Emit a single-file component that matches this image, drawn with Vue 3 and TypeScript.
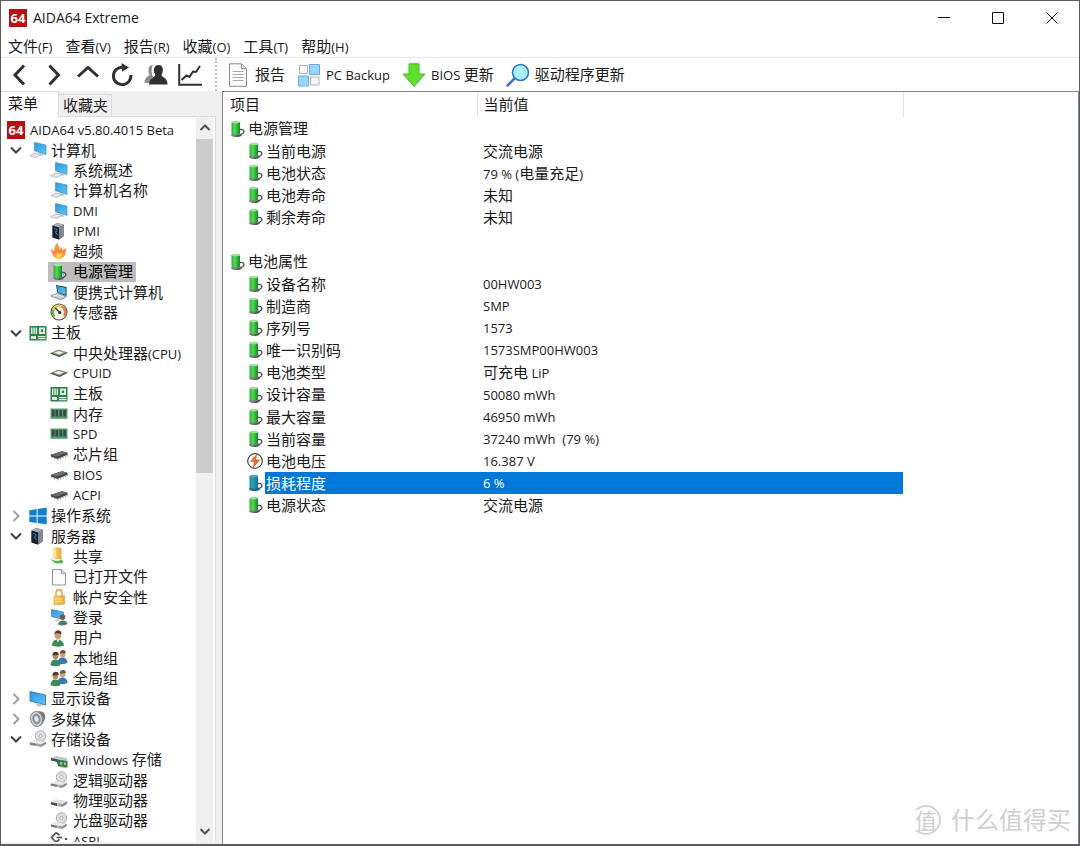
<script setup lang="ts">
import { h, ref, type FunctionalComponent } from 'vue'

interface TreeNode {
  label: string
  icon: string
  level: 0 | 1 | 2
  open?: boolean
}

interface InfoRow {
  name: string
  value?: string
  icon?: string
  kind: 'group' | 'item' | 'blank'
}

// Chinese runs are set slightly larger than the Latin ones beside them.
const Txt: FunctionalComponent<{ t: string }> = (props) =>
  h(
    'span',
    { class: 'txt' },
    props.t
      .split(/([\u4e00-\u9fff]+)/)
      .filter((s) => s !== '')
      .map((s) => (/[\u4e00-\u9fff]/.test(s) ? h('span', { class: 'cjk' }, s) : s)),
  )
Txt.props = ['t']

const menus = ['文件(F)', '查看(V)', '报告(R)', '收藏(O)', '工具(T)', '帮助(H)']

const navTools = [
  { id: 'back', label: '后退' },
  { id: 'forward', label: '前进' },
  { id: 'up', label: '向上' },
  { id: 'refresh', label: '刷新' },
  { id: 'users', label: '用户' },
  { id: 'chart', label: '图表' },
]

const actions = [
  { id: 'report', label: '报告' },
  { id: 'backup', label: 'PC Backup' },
  { id: 'download', label: 'BIOS 更新' },
  { id: 'search', label: '驱动程序更新' },
]

const n = (level: 0 | 1 | 2, icon: string, label: string, open?: boolean): TreeNode => ({ level, icon, label, open })

const tree: TreeNode[] = [
  n(0, 'logo', 'AIDA64 v5.80.4015 Beta'),
  n(1, 'computer', '计算机', true),
  n(2, 'computer', '系统概述'),
  n(2, 'computer', '计算机名称'),
  n(2, 'computer', 'DMI'),
  n(2, 'server', 'IPMI'),
  n(2, 'flame', '超频'),
  n(2, 'battery', '电源管理'),
  n(2, 'laptop', '便携式计算机'),
  n(2, 'gauge', '传感器'),
  n(1, 'board', '主板', true),
  n(2, 'cpu', '中央处理器(CPU)'),
  n(2, 'cpu', 'CPUID'),
  n(2, 'board', '主板'),
  n(2, 'memory', '内存'),
  n(2, 'memory', 'SPD'),
  n(2, 'chip', '芯片组'),
  n(2, 'chip', 'BIOS'),
  n(2, 'chip', 'ACPI'),
  n(1, 'windows', '操作系统', false),
  n(1, 'server', '服务器', true),
  n(2, 'share', '共享'),
  n(2, 'file', '已打开文件'),
  n(2, 'lock', '帐户安全性'),
  n(2, 'logon', '登录'),
  n(2, 'user', '用户'),
  n(2, 'group', '本地组'),
  n(2, 'group', '全局组'),
  n(1, 'display', '显示设备', false),
  n(1, 'speaker', '多媒体', false),
  n(1, 'disc', '存储设备', true),
  n(2, 'winstore', 'Windows 存储'),
  n(2, 'disc', '逻辑驱动器'),
  n(2, 'drive', '物理驱动器'),
  n(2, 'disc', '光盘驱动器'),
  n(2, 'aspi', 'ASPI'),
]

const item = (name: string, value: string, icon = 'battery'): InfoRow => ({ kind: 'item', name, value, icon })

const rows: InfoRow[] = [
  { kind: 'group', name: '电源管理', icon: 'battery' },
  item('当前电源', '交流电源'),
  item('电池状态', '79 % (电量充足)'),
  item('电池寿命', '未知'),
  item('剩余寿命', '未知'),
  { kind: 'blank', name: '' },
  { kind: 'group', name: '电池属性', icon: 'battery' },
  item('设备名称', '00HW003'),
  item('制造商', 'SMP'),
  item('序列号', '1573'),
  item('唯一识别码', '1573SMP00HW003'),
  item('电池类型', '可充电 LiP'),
  item('设计容量', '50080 mWh'),
  item('最大容量', '46950 mWh'),
  item('当前容量', '37240 mWh  (79 %)'),
  item('电池电压', '16.387 V', 'bolt'),
  item('损耗程度', '6 %'),
  item('电源状态', '交流电源'),
]

const selectedNode = ref(7)
const selectedRow = ref(16)
const activeTab = ref(0)
</script>

<template>
  <div class="window">
    <svg class="defs" width="0" height="0" aria-hidden="true">
      <defs>
        <linearGradient id="g-scr" x1="0" y1="0" x2="1" y2="1">
          <stop offset="0" stop-color="#2f97dc" /><stop offset="1" stop-color="#5cc6f7" />
        </linearGradient>
        <linearGradient id="g-bat" x1="0" y1="0" x2="1" y2="0">
          <stop offset="0" stop-color="#2fae3a" /><stop offset=".4" stop-color="#4fdc50" /><stop offset="1" stop-color="#17812a" />
        </linearGradient>
        <linearGradient id="g-sel" x1="0" y1="0" x2="1" y2="0">
          <stop offset="0" stop-color="#1a84a0" /><stop offset=".4" stop-color="#2fa5a8" /><stop offset="1" stop-color="#136c94" />
        </linearGradient>
        <linearGradient id="g-fire" x1="0" y1="0" x2="0" y2="1">
          <stop offset="0" stop-color="#f6a13a" /><stop offset=".6" stop-color="#f9843a" /><stop offset="1" stop-color="#fdc44a" />
        </linearGradient>
        <linearGradient id="g-gold" x1="0" y1="0" x2="1" y2="0">
          <stop offset="0" stop-color="#f9d36e" /><stop offset="1" stop-color="#e9a93a" />
        </linearGradient>
        <linearGradient id="g-drv" x1="0" y1="0" x2="1" y2="0">
          <stop offset="0" stop-color="#dcdcdc" /><stop offset="1" stop-color="#777" />
        </linearGradient>
      </defs>
      <symbol id="i-logo" viewBox="0 0 18 18">
        <rect width="18" height="18" fill="#b80f12" />
        <text x="9" y="14" text-anchor="middle" class="logo-text">64</text>
      </symbol>
      <symbol id="i-computer" viewBox="0 0 18 18">
        <path d="M5.500 1.500 17 4v9.500L5.500 9.800z" fill="url(#g-scr)" stroke="#3a7fb0" stroke-width=".6" />
        <path d="M10 11.600 14 13l-.5 2-4-1.200z" fill="#bcc4ca" />
        <path d="M.5 14.800 6 11.800l6.500 1.700-6 3.200z" fill="#d3dade" stroke="#9aa6ae" stroke-width=".5" />
        <path d="M2.500 14.800 8 13M4.500 15.500l5.500-2" stroke="#f5f7f8" stroke-width=".6" />
      </symbol>
      <symbol id="i-server" viewBox="0 0 18 18">
        <path d="M2.500 3.500 7 1l7 1.800V14l-4.800 3.500-6.700-2z" fill="#4b4f54" />
        <path d="M9 5.200 14 3v11l-4.800 3.500z" fill="#85898d" />
        <path d="M2.500 3.500 9 5.200v12.300l-6.500-2z" fill="#17222f" />
        <path d="M2.500 3.500 7 1l7 1.800-5 2.400z" fill="#a9adb1" />
        <path d="M4 6.500c3 0 4 2 1.500 3.500L7.500 13" fill="none" stroke="#3378b5" stroke-width="1.200" />
      </symbol>
      <symbol id="i-flame" viewBox="0 0 18 18">
        <path d="M8 17C4 16.500 1.500 13 1 6.500l3.200 3C4 6 5 3 7.500.8 8 4 9.500 5 10 8l2-3.500.6 3.500L16.500 6c-.5 2-1.500 4-1 6-1 3-4 5-7.500 5z" fill="url(#g-fire)" />
        <path d="M8 16.500c-2-2-2-4-.5-6l1.500 2 3-2c0 3-1 5-4 6z" fill="#fdd45c" />
      </symbol>
      <symbol id="i-battery" viewBox="0 0 18 18">
        <ellipse cx="8.500" cy="15" rx="5.500" ry="2" fill="#7b7e7e" />
        <path d="M3.500 2v11.500c1.500 1.400 7 1.400 8.500 0V2z" fill="url(#g-bat)" />
        <ellipse cx="7.800" cy="2" rx="4.200" ry="1.200" fill="#a4dfa0" />
        <path d="M12 9.500c4.500-.5 5 3 2 4.500-1.500.8-3 2.500-5.500 2.200" fill="none" stroke="#4b4e50" stroke-width="1.300" />
      </symbol>
      <symbol id="i-battery-sel" viewBox="0 0 18 18">
        <ellipse cx="8.500" cy="15" rx="5.500" ry="2" fill="#2f6590" />
        <path d="M3.500 2v11.500c1.500 1.400 7 1.400 8.500 0V2z" fill="url(#g-sel)" />
        <ellipse cx="7.800" cy="2" rx="4.200" ry="1.200" fill="#5aa4c0" />
        <path d="M12 9.500c4.500-.5 5 3 2 4.500-1.500.8-3 2.500-5.500 2.200" fill="none" stroke="#22527c" stroke-width="1.300" />
      </symbol>
      <symbol id="i-bolt" viewBox="0 0 18 18">
        <circle cx="9" cy="9" r="7.300" fill="#fff" stroke="#4a4a4a" stroke-width="1.200" />
        <path d="M11 2 4.500 9.500l4 .2L7 16l6.500-8-4-.2z" fill="#e8702a" stroke="#b54e14" stroke-width=".5" />
      </symbol>
      <symbol id="i-laptop" viewBox="0 0 18 18">
        <path d="M6 2 16.500 4v9L7.500 10z" fill="#23323f" />
        <path d="M7 3 15.500 4.800v7L8 9.500z" fill="url(#g-scr)" />
        <path d="M.5 13 7 10.500l9.500 3L11 16.800z" fill="#c9d0d6" stroke="#66747f" stroke-width=".7" />
        <path d="M3 13.200 7.500 11.700l6 2" fill="none" stroke="#eef1f3" stroke-width=".8" />
      </symbol>
      <symbol id="i-gauge" viewBox="0 0 18 18">
        <circle cx="9" cy="9" r="8" fill="#fbf7e6" stroke="#55584f" stroke-width="1.200" />
        <path d="M4.500 13.500a6.200 6.200 0 0 1-1-7" fill="none" stroke="#5fb848" stroke-width="2.400" />
        <path d="M3.500 6.500a6.200 6.200 0 0 1 8-3" fill="none" stroke="#f2c53d" stroke-width="2.400" />
        <path d="M11.500 3.500a6.200 6.200 0 0 1 2.500 9.300" fill="none" stroke="#ea7a4c" stroke-width="2.400" />
        <path d="m5 5 5 4.500" stroke="#333" stroke-width="1.500" /><circle cx="9.800" cy="9.500" r="1.600" fill="#333" />
      </symbol>
      <symbol id="i-board" viewBox="0 0 18 18">
        <rect x=".5" y="2" width="17" height="14.500" fill="#2f7f4a" />
        <path d="M2 3.500h1.500V10H2zM4.300 3.500h1.500V10H4.300zM6.600 3.500h1.500V10H6.600zM10 3.500h6V10h-6zM2 12h5v3H2zM9 12h7.500v1.200H9zM9 14h7.500v1.200H9z" fill="#d9efdd" />
        <path d="M12 5.500h2V8h-2z" fill="#2f7f4a" />
      </symbol>
      <symbol id="i-cpu" viewBox="0 0 18 18">
        <path d="M0 9.500 8.500 6 18 8.800 9.500 13z" fill="#3d4a38" />
        <path d="M1 8.700 8.500 5.500 17 8.300 9.500 11.800z" fill="#82947a" />
        <path d="M4 8.700 8.600 6.900l5 1.600-4.300 2z" fill="#eef0e2" />
      </symbol>
      <symbol id="i-memory" viewBox="0 0 18 18">
        <path d="M.5 3.500h17V14H.5z" fill="#4f9a6d" />
        <path d="M2 5h2.500v6.500H2zM5.500 5H8v6.500H5.500zM9.500 5H12v6.500H9.500zM13.300 5h2.700v6.500h-2.700z" fill="#3c4746" />
        <path d="M1 13.500h7.500M10 13.500h7" stroke="#9bbf9e" stroke-dasharray="1 .6" />
      </symbol>
      <symbol id="i-chip" viewBox="0 0 18 18">
        <path d="M.8 8.800 12 5.200l5.500 1.500v2L7.500 13 .8 10.500z" fill="#3f4143" />
        <path d="M.8 8.800 12 5.200l5.500 1.500L7 10.700z" fill="#6b6d70" />
        <path d="M2 10.500v1.800M4.500 11.500v1.800M8 12.700v1.800M10.500 11.600v1.800M13 10.600v1.800M15.500 9.500v1.800M17.300 8.700v1.600" stroke="#9b9da0" stroke-width="1" />
      </symbol>
      <symbol id="i-windows" viewBox="0 0 18 18">
        <path d="M.3 3.200 7.700 2v6.500H.3zM8.600 1.900 17.700.6v7.900H8.600zM.3 9.500h7.400V16L.3 14.900zM8.600 9.500h9.100v7.900l-9.100-1.300z" fill="#0f7fd4" />
      </symbol>
      <symbol id="i-share" viewBox="0 0 18 18">
        <path d="M3.500.5H9l2.500 1V12h-8z" fill="url(#g-gold)" />
        <path d="M3.500.5 6 2v11l-2.500-1.500z" fill="#fbe29a" />
        <path d="M.5 11.500c3 2.500 6 3 10 1.500V11.500l3 3-2.500 3v-1.500C6.500 17.500 2.500 15.500.5 11.500z" fill="#52b552" />
      </symbol>
      <symbol id="i-file" viewBox="0 0 18 18">
        <path d="M2.500 1.500h9l4 4v11.500h-13z" fill="#fbfbfb" stroke="#898989" stroke-width=".9" />
        <path d="M11.500 1.500v4h4" fill="#e3e3e3" stroke="#898989" stroke-width=".8" />
      </symbol>
      <symbol id="i-lock" viewBox="0 0 18 18">
        <path d="M6 8.500V5c0-4.500 6-4.500 6 0v3.500" fill="none" stroke="#dfac43" stroke-width="1.600" />
        <path d="M4 8.500 14.500 7.500V16L4 17z" fill="url(#g-gold)" stroke="#cf952f" stroke-width=".6" />
        <path d="M6 11h6.500M6 13.500h6.500" stroke="#fbe5a5" stroke-width=".7" />
      </symbol>
      <symbol id="i-logon" viewBox="0 0 18 18">
        <path d="M1.500 1.500 13.500 4v7.500l-12-3z" fill="url(#g-scr)" stroke="#3a6f98" stroke-width=".6" />
        <path d="M4 12.500 8 11l3 1-4 1.500z" fill="#c2c9cf" />
        <circle cx="12.500" cy="9" r="2.800" fill="#7a5a45" />
        <path d="M8 16.500c.5-5 8.500-5.500 9.500-.5-2.500 1.500-6.500 2-9.500.5z" fill="#477f62" />
      </symbol>
      <symbol id="i-user" viewBox="0 0 18 18">
        <path d="M2 16.500c0-8 11-8 12 0-3 1.500-9 1.500-12 0z" fill="#3f8a5b" />
        <path d="m6.500 10.500 1.500 3 1.500-3z" fill="#e8f0e8" />
        <ellipse cx="8" cy="6" rx="3.300" ry="4" fill="#c79a76" />
        <path d="M4.500 5.500C4 .5 11.500-.5 11.600 5c-3 0-4-1-5-1z" fill="#55402f" />
      </symbol>
      <symbol id="i-group" viewBox="0 0 18 18">
        <path d="M7.500 14c0-7 9.500-7.500 10 0-3 1.500-7 1.500-10 0z" fill="#3a78b3" />
        <ellipse cx="12.700" cy="5" rx="2.800" ry="3.400" fill="#c9a17e" />
        <path d="M9.700 4.500C9.500.5 16-.5 15.800 4z" fill="#6d553e" />
        <path d="M.5 16.200c0-7.500 9.500-7.500 10 0-3 1.500-7 1.500-10 0z" fill="#3f8a5b" />
        <ellipse cx="5.500" cy="6.800" rx="2.900" ry="3.500" fill="#b98a68" />
        <path d="M2.400 6.500C2.200 1.500 9 1.500 8.700 6z" fill="#4e392b" />
      </symbol>
      <symbol id="i-display" viewBox="0 0 18 18">
        <path d="M1 1.500 16.500 5v10L1 11z" fill="url(#g-scr)" stroke="#2f7cb4" stroke-width=".9" />
        <path d="m6 13.500 4-.2 4 2-4.500 1.500z" fill="#b9c2c9" />
      </symbol>
      <symbol id="i-speaker" viewBox="0 0 18 18">
        <path d="M8 1.500C15 0 17.500 5 15.500 10s-5 7-9 7z" fill="#77797b" />
        <ellipse cx="7.500" cy="9" rx="6" ry="7.500" transform="rotate(-14 7.500 9)" fill="#d6d8da" stroke="#888" />
        <ellipse cx="7.500" cy="9" rx="4.200" ry="5.500" transform="rotate(-14 7.500 9)" fill="#8c949a" />
        <ellipse cx="7.500" cy="9" rx="2" ry="3" transform="rotate(-14 7.500 9)" fill="#dbe8f0" />
      </symbol>
      <symbol id="i-drive" viewBox="0 0 18 18">
        <path d="m1 11 4.500-2.500L17 10.500v2.300L12.500 16 1 13.500z" fill="url(#g-drv)" />
        <path d="m1 11 4.500-2.500L17 10.500 12.500 13z" fill="#e6e6e6" />
        <path d="M1 11v2.500L7 15v-2.600z" fill="#4c4f52" />
      </symbol>
      <symbol id="i-disc" viewBox="0 0 18 18">
        <circle cx="11.500" cy="6" r="5.300" fill="#dcdfe1" stroke="#a0a4a7" stroke-width=".8" />
        <circle cx="11.500" cy="6" r="1.600" fill="#fff" stroke="#999" stroke-width=".7" />
        <path d="m.8 12.500 5-2.500 11 2v2L12 17 .8 14.800z" fill="url(#g-drv)" />
        <path d="m.8 12.500 5-2.500 11 2L12 14.300z" fill="#e9e9e9" />
        <path d="m.8 12.500 6 1.200v2L.8 14.800z" fill="#77797b" />
      </symbol>
      <symbol id="i-winstore" viewBox="0 0 18 18">
        <path d="M1 7 6 5l11 2v2.500L12.500 12 1 9.500z" fill="#c4c7c9" />
        <path d="m1 7 7 1.500V11L1 9.500z" fill="#45484a" />
        <path d="M6.500 8.500 17.500 10v6.500L8 15.200z" fill="#2f7a4d" />
        <path d="M10 11h2.500v2.500H10zM14 11.500h2V14h-2z" fill="#9cc7a0" /><path d="M8.500 15.500 16 16.700" stroke="#caa84a" />
      </symbol>
      <symbol id="i-aspi" viewBox="0 0 18 18">
        <path d="M9.500 3 6 .8 1.500 5.500 6 10l3.500-2.500M6.500 5.500H12" fill="none" stroke="#484b4e" stroke-width="1.600" />
        <path d="M15 6h2v2h-2z" fill="#484b4e" />
      </symbol>

      <symbol id="t-back" viewBox="0 0 24 24"><path d="m16 2.500-9 9.500 9 9.500" class="stroke" /></symbol>
      <symbol id="t-forward" viewBox="0 0 24 24"><path d="m7.500 2.500 9 9.500-9 9.500" class="stroke" /></symbol>
      <symbol id="t-up" viewBox="0 0 24 24"><path d="m2 13.500 10-9 10 9" class="stroke" /></symbol>
      <symbol id="t-refresh" viewBox="0 0 24 24">
        <path d="M13 4.300A8.700 8.700 0 1 0 20.800 12" class="stroke" /><path d="m11.500 0 7.500 4.500-7 4.300z" fill="#303030" />
      </symbol>
      <symbol id="t-users" viewBox="0 0 24 24">
        <path d="M9 2C3.500 2 4 8 5.500 11.500c0 2-5 2-5 8.500H5c.5-3 2-5 4-6-2-4-2-8.500 0-12z" fill="#8a8a8a" />
        <path d="M14.500 2c5.500 0 5 6.500 3 10 .3 2.500 6 2 6 9.500H5c0-7.500 6-7 6.300-9.500-2-3.500-2.300-10 3.200-10z" fill="#303030" />
      </symbol>
      <symbol id="t-chart" viewBox="0 0 24 24">
        <path d="M1.200 1v20.800H24" fill="none" stroke="#303030" stroke-width="2" />
        <path d="m3.500 17 5-4.500 3 1.500 3.500-5.500 3 .5 4-6" fill="none" stroke="#303030" stroke-width="2" />
      </symbol>
      <symbol id="t-report" viewBox="0 0 24 24">
        <path d="M3.500.8h12l5 5v17.500h-17z" fill="#fbfbfb" stroke="#8b8b8b" />
        <path d="M15.500.8v5h5" fill="#e9e9e9" stroke="#8b8b8b" />
        <path d="M6.500 8.500h11M6.500 11.500h11M6.500 14.500h11M6.500 17.500h11" stroke="#aaa" />
      </symbol>
      <symbol id="t-backup" viewBox="0 0 24 24">
        <path d="M2.500 2.500h8v8h-8zM13.500 14h8.500v8h-8.500z" fill="#f6f6f6" stroke="#b3b3b3" />
        <path d="M12.500 1.500h10v10h-10zM1.500 13h10v10h-10z" fill="#99d6ff" stroke="#65addb" />
      </symbol>
      <symbol id="t-download" viewBox="0 0 24 24">
        <path d="M7 .8h10V11h6L12 23.500 1 11h6z" fill="#5be02c" stroke="#4bb52a" />
      </symbol>
      <symbol id="t-search" viewBox="0 0 24 24">
        <path d="m9.500 14.500-8 8" stroke="#3a76c6" stroke-width="2.500" stroke-linecap="round" />
        <circle cx="14.500" cy="9.500" r="8" fill="#a9f0ff" stroke="#3a76c6" stroke-width="1.600" />
      </symbol>
    </svg>

    <header class="titlebar">
      <svg class="icon"><use href="#i-logo" /></svg>
      <h1>AIDA64 Extreme</h1>
      <div class="winbtns">
        <button aria-label="最小化"><svg viewBox="0 0 12 12"><path d="M0 5.500h12" /></svg></button>
        <button aria-label="最大化"><svg viewBox="0 0 12 12"><path d="M.5.5h11v11H.5z" /></svg></button>
        <button aria-label="关闭"><svg viewBox="0 0 12 12"><path d="m.5.5 11 11m0-11-11 11" /></svg></button>
      </div>
    </header>

    <nav class="menubar">
      <button v-for="m in menus" :key="m"><Txt :t="m" /></button>
    </nav>

    <div class="toolbar">
      <div class="nav">
        <button v-for="t in navTools" :key="t.id" :aria-label="t.label">
          <svg class="tool"><use :href="'#t-' + t.id" /></svg>
        </button>
      </div>
      <div class="actions">
        <button v-for="a in actions" :key="a.id">
          <svg class="tool"><use :href="'#t-' + a.id" /></svg><Txt :t="a.label" />
        </button>
      </div>
    </div>

    <main class="body">
      <aside class="side">
        <div class="tabs" role="tablist">
          <button
            v-for="(t, i) in ['菜单', '收藏夹']"
            :key="t"
            role="tab"
            :aria-selected="activeTab === i"
            :class="{ active: activeTab === i }"
            @click="activeTab = i"
          >
            <Txt :t="t" />
          </button>
        </div>
        <div class="panel">
          <ul class="tree" role="tree">
            <li v-for="(node, i) in tree" :key="i" :class="'lv' + node.level" role="treeitem">
              <svg v-if="node.level === 1" class="chev" :class="{ closed: !node.open }" viewBox="0 0 12 12">
                <path :d="node.open ? 'm1 3.500 5 5 5-5' : 'm3.500 1 5 5-5 5'" />
              </svg>
              <button :class="{ selected: selectedNode === i }" @click="selectedNode = i">
                <svg class="icon"><use :href="'#i-' + node.icon" /></svg><Txt :t="node.label" />
              </button>
            </li>
          </ul>
          <div class="scroll">
            <button aria-label="向上滚动"><svg viewBox="0 0 12 12"><path d="m1.500 8 4.500-4.500L10.500 8" /></svg></button>
            <div class="track"><div class="thumb"></div></div>
            <button aria-label="向下滚动"><svg viewBox="0 0 12 12"><path d="m1.500 4 4.500 4.500L10.500 4" /></svg></button>
          </div>
        </div>
      </aside>

      <section class="content">
        <table>
          <colgroup><col class="c-name" /><col class="c-value" /><col /></colgroup>
          <thead>
            <tr>
              <th scope="col"><Txt t="项目" /></th>
              <th scope="col" class="value"><Txt t="当前值" /></th>
              <td></td>
            </tr>
          </thead>
          <tbody>
            <tr
              v-for="(r, i) in rows"
              :key="i"
              :class="[r.kind, { selected: selectedRow === i }]"
              @click="selectedRow = i"
            >
              <td>
                <div v-if="r.kind !== 'blank'" class="name">
                  <svg class="icon"><use :href="'#i-' + r.icon + (selectedRow === i ? '-sel' : '')" /></svg>
                  <Txt :t="r.name" />
                </div>
              </td>
              <td class="value"><Txt v-if="r.value" :t="r.value" /></td>
              <td></td>
            </tr>
          </tbody>
        </table>
      </section>
    </main>

    <div class="watermark">
      <span class="badge">值</span><span>什么值得买</span>
    </div>
  </div>
</template>

<style>
html,
body {
  margin: 0;
  background: #fff;
}
.txt {
  white-space: pre;
}
.txt .cjk {
  font-size: 15px;
}
.logo-text {
  font: bold 13px 'Open Sans', sans-serif;
  fill: #fff;
}
.stroke {
  fill: none;
  stroke: #303030;
  stroke-width: 3;
}
</style>

<style scoped>
.window {
  position: relative;
  box-sizing: border-box;
  height: 100vh;
  display: flex;
  flex-direction: column;
  border: 1px solid #5e5b5d;
  border-bottom-width: 2px;
  background: #fff;
  color: #1a1a1a;
  font: 13px/20px 'Open Sans', 'Noto Sans CJK SC', sans-serif;
  overflow: hidden;
}
.defs {
  position: absolute;
}
button {
  margin: 0;
  padding: 0;
  border: 0;
  background: none;
  color: inherit;
  font: inherit;
  display: flex;
  align-items: center;
}
.icon {
  width: 18px;
  height: 18px;
  flex: none;
}
.titlebar {
  flex: none;
  display: flex;
  align-items: center;
  height: 34px;
  padding-left: 8px;
}
.titlebar h1 {
  flex: 1;
  margin: 0 0 0 6px;
  font-size: 14px;
  font-weight: 400;
}
.winbtns {
  display: flex;
}
.winbtns button {
  width: 54px;
  height: 34px;
  justify-content: center;
}
.winbtns svg {
  width: 12px;
  height: 12px;
}
.winbtns path {
  fill: none;
  stroke: #111;
}
.menubar {
  flex: none;
  display: flex;
  gap: 13px;
  height: 22px;
  padding-left: 7px;
  border-bottom: 1px solid #e6e6e6;
}
.toolbar {
  flex: none;
  display: flex;
  height: 33px;
}
.nav {
  display: flex;
  padding: 0 8px 0 2px;
  border-right: 2px dotted #c4c4c4;
}
.nav button {
  width: 34px;
  justify-content: center;
}
.tool {
  width: 24px;
  height: 24px;
  flex: none;
}
.actions {
  display: flex;
  gap: 12px;
  padding-left: 9px;
}
.actions button {
  gap: 5px;
}
.body {
  flex: 1;
  min-height: 0;
  display: flex;
  background: #f0f0f0;
}
.side {
  width: 221px;
  flex: none;
  display: flex;
  flex-direction: column;
  padding-bottom: 2px;
  box-sizing: border-box;
}
.tabs {
  flex: none;
  display: flex;
  align-items: flex-end;
  height: 26px;
  padding-right: 6px;
}
.tabs::after {
  content: '';
  flex: 1;
  border-bottom: 1px solid #dcdcdc;
}
.tabs button {
  box-sizing: border-box;
  height: 23px;
  padding: 0 3px 0 4px;
  border: 1px solid #dcdcdc;
  border-left: 0;
}
.tabs button.active {
  height: 26px;
  width: 58px;
  padding: 0 0 3px 7px;
  border-bottom: 0;
  background: #fff;
}
.panel {
  flex: 1;
  min-height: 0;
  display: flex;
  margin-right: 6px;
  padding-right: 2px;
  background: #fff;
  border-right: 1px solid #dcdcdc;
}
.tree {
  flex: 1;
  margin: 0;
  padding: 3px 0 0;
  list-style: none;
  overflow: hidden;
}
.tree li {
  display: flex;
  align-items: center;
  height: 20px;
}
.tree li:nth-child(3n + 5) {
  height: 21px;
}
.tree button {
  gap: 5px;
  height: 20px;
  padding: 0 3px 0 2px;
  white-space: nowrap;
}
.tree .lv0 {
  padding-left: 4px;
}
.tree .lv1 {
  padding-left: 9px;
}
.tree .lv1 button {
  margin-left: 5px;
  gap: 4px;
}
.tree .lv2 {
  padding-left: 47px;
}
.tree .selected {
  background: #bdbdbd;
  color: #000;
}
.chev {
  width: 12px;
  height: 12px;
}
.chev path {
  fill: none;
  stroke: #404040;
  stroke-width: 2;
}
.chev.closed path {
  stroke: #a0a0a0;
}
.scroll {
  flex: none;
  width: 17px;
  display: flex;
  flex-direction: column;
  background: #f0f0f0;
}
.scroll button {
  height: 22px;
  justify-content: center;
}
.scroll svg {
  width: 12px;
  height: 12px;
}
.scroll path {
  fill: none;
  stroke: #505050;
  stroke-width: 2;
}
.track {
  flex: 1;
}
.thumb {
  height: 49%;
  background: #cdcdcd;
}
.content {
  flex: 1;
  min-width: 0;
  background: #fff;
  border: 1px solid #828790;
  border-bottom: 0;
}
table {
  width: 100%;
  table-layout: fixed;
  border-collapse: collapse;
}
.c-name {
  width: 254px;
}
.c-value {
  width: 426px;
}
th,
td {
  padding: 0;
  text-align: left;
  font-weight: 400;
}
th {
  height: 25px;
  padding-left: 7px;
  box-sizing: border-box;
  border-right: 1px solid #e2e2e2;
}
tbody tr td {
  height: 22px;
}
tbody tr:nth-child(6n + 1) td {
  height: 23px;
}
.name {
  display: flex;
  align-items: center;
  height: 22px;
  padding-left: 5px;
}
.item .name {
  padding-left: 23px;
}
.name .txt {
  flex: 1;
  margin-left: 1px;
  padding-left: 1px;
}
.value {
  padding-left: 6px;
}
.selected .name .txt {
  height: 22px;
  line-height: 22px;
  background: #0078d7;
}
.selected .value {
  background: #0078d7;
}
.item.selected {
  color: #fff;
}
.watermark {
  position: absolute;
  right: 8px;
  bottom: 8px;
  display: flex;
  align-items: center;
  gap: 10px;
  color: #cfcfcf;
  font-size: 24px;
  line-height: 32px;
}
.badge {
  box-sizing: border-box;
  width: 30px;
  height: 30px;
  border: 2px solid #d4d4d4;
  border-left-color: transparent;
  border-radius: 50%;
  line-height: 26px;
  text-align: center;
  font-size: 22px;
}
</style>
